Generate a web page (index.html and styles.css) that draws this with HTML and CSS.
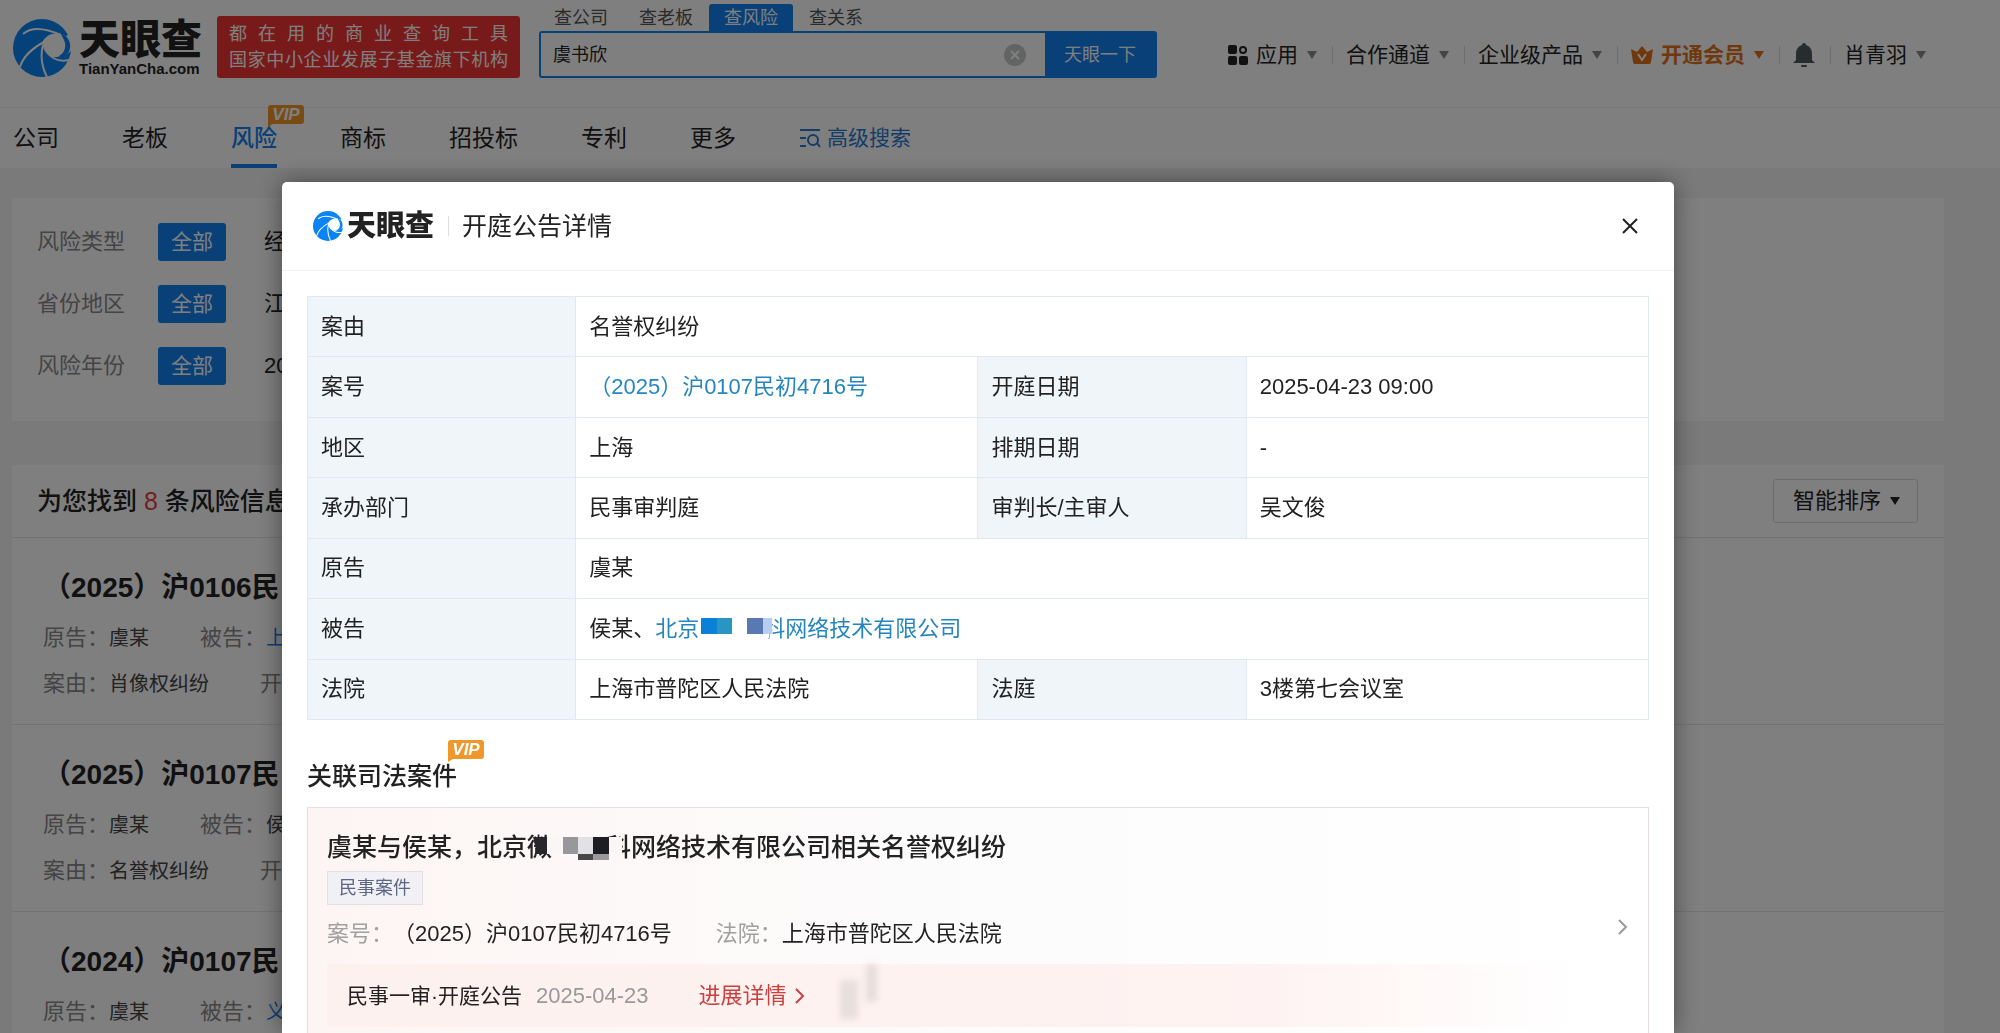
FILE: index.html
```html
<!DOCTYPE html>
<html lang="zh-CN">
<head>
<meta charset="utf-8">
<title>天眼查</title>
<link rel="stylesheet" href="styles.css">
</head>
<body>
<svg class="defs" aria-hidden="true">
  <symbol id="logo" viewBox="0 0 58 58">
    <circle cx="29" cy="29" r="29" fill="#0a84f5"/>
    <path class="cut" d="M29 24C32 16 43 11 53 17L60 13V27C57 37 50 36 44 38C36 39 31 34 29 24Z"/>
    <path d="M47 14C54 16 58 22 57 29C56 36 51 38 46 37C51 34 53 29 52 24C51 20 49 17 47 14Z" fill="#0a84f5"/>
    <path class="line" d="M10 15C18 8 32 9 48 16M31 23C18 30 10 38 7 48M30 26C27 37 29 48 34 58M34 33C39 40 47 43 56 41" fill="none" stroke-width="2"/>
  </symbol>
  <symbol id="vip" viewBox="0 0 36 22">
    <path d="M3 0H33Q36 0 36 3V16Q36 19 33 19H5L0 22V3Q0 0 3 0Z" fill="#f0972b"/>
  </symbol>
  <symbol id="caret" viewBox="0 0 10 8"><path d="M0 0H10L5 8Z" fill="currentColor"/></symbol>
  <symbol id="chev" viewBox="0 0 10 16"><path d="M1 1L8 8L1 15" fill="none" stroke="currentColor" stroke-width="2"/></symbol>
</svg>

<div class="page">
  <header class="top">
    <a class="brand" href="#">
      <svg class="brand-icon"><use href="#logo"/></svg>
      <span class="brand-text"><b>天眼查</b><i>TianYanCha.com</i></span>
    </a>
    <div class="slogan"><span>都 在 用 的 商 业 查 询 工 具</span><span>国家中小企业发展子基金旗下机构</span></div>
    <form class="search">
      <div class="search-tabs">
        <button type="button">查公司</button><button type="button">查老板</button><button type="button" class="on">查风险</button><button type="button">查关系</button>
      </div>
      <div class="search-box">
        <input type="text" value="虞书欣" aria-label="搜索">
        <button type="button" class="clear" aria-label="清空"><svg viewBox="0 0 22 22"><circle cx="11" cy="11" r="11" fill="#c4c8c8"/><path d="M7 7L15 15M15 7L7 15" stroke="#fff" stroke-width="2"/></svg></button>
        <button type="button" class="go">天眼一下</button>
      </div>
    </form>
    <nav class="user-nav">
      <a href="#"><svg class="apps" viewBox="0 0 20 20"><rect width="9" height="9" rx="2"/><circle cx="15" cy="5" r="3" fill="none" stroke="#222" stroke-width="2"/><rect y="11" width="9" height="9" rx="2"/><rect x="11" y="11" width="9" height="9" rx="2"/></svg>应用<svg class="caret"><use href="#caret"/></svg></a>
      <a href="#">合作通道<svg class="caret"><use href="#caret"/></svg></a>
      <a href="#">企业级产品<svg class="caret"><use href="#caret"/></svg></a>
      <a href="#" class="member"><svg class="crown" viewBox="0 0 22 18"><path d="M0 3L6 6L11 0L16 6L22 3L20 16Q20 18 18 18H4Q2 18 2 16Z" fill="currentColor"/><path d="M7 8L11 14L15 8" fill="none" stroke="#fff" stroke-width="2"/></svg>开通会员<svg class="caret"><use href="#caret"/></svg></a>
      <a href="#" aria-label="消息"><svg class="bell" viewBox="0 0 22 24"><path d="M11 0Q13 0 13 2Q19 4 19 11V17L22 20H0L3 17V11Q3 4 9 2Q9 0 11 0Z" fill="#4c5a62"/><rect x="8" y="22" width="6" height="2" rx="1" fill="#4c5a62"/></svg></a>
      <a href="#">肖青羽<svg class="caret"><use href="#caret"/></svg></a>
    </nav>
  </header>

  <nav class="cats">
    <a href="#">公司</a>
    <a href="#">老板</a>
    <a href="#" class="on">风险<span class="vip"><svg><use href="#vip"/></svg><em>VIP</em></span></a>
    <a href="#">商标</a>
    <a href="#">招投标</a>
    <a href="#">专利</a>
    <a href="#">更多</a>
    <a href="#" class="adv"><svg viewBox="0 0 22 20"><path d="M1 2H21M1 10H7M1 18H7M18 15L21 19" fill="none" stroke="currentColor" stroke-width="2"/><circle cx="14" cy="12" r="5" fill="none" stroke="currentColor" stroke-width="2"/></svg>高级搜索</a>
  </nav>

  <main class="content">
    <section class="filters">
      <div class="filter"><span>风险类型</span><button type="button">全部</button><a href="#">经</a></div>
      <div class="filter"><span>省份地区</span><button type="button">全部</button><a href="#">江</a></div>
      <div class="filter"><span>风险年份</span><button type="button">全部</button><a href="#">20</a></div>
    </section>
    <section class="results">
      <div class="results-head">
        <h2>为您找到 <em>8</em> 条风险信息</h2>
        <button type="button" class="sort">智能排序<svg class="caret"><use href="#caret"/></svg></button>
      </div>
      <article class="item">
        <h3>（2025）沪0106民</h3>
        <p><span>原告：</span><b>虞某</b><span>被告：</span><a href="#">上</a></p>
        <p><span>案由：</span><b>肖像权纠纷</b><span>开</span></p>
      </article>
      <article class="item">
        <h3>（2025）沪0107民</h3>
        <p><span>原告：</span><b>虞某</b><span>被告：</span><b>侯</b></p>
        <p><span>案由：</span><b>名誉权纠纷</b><span>开</span></p>
      </article>
      <article class="item">
        <h3>（2024）沪0107民</h3>
        <p><span>原告：</span><b>虞某</b><span>被告：</span><a href="#">义</a></p>
      </article>
    </section>
  </main>
</div>

<div class="mask">
  <div class="modal" role="dialog" aria-labelledby="dlg-title">
    <header class="modal-head">
      <svg class="modal-icon"><use href="#logo"/></svg>
      <b>天眼查</b>
      <h1 id="dlg-title">开庭公告详情</h1>
      <button type="button" class="close" aria-label="关闭"><svg viewBox="0 0 16 16"><path d="M1 1L15 15M15 1L1 15" stroke="#222" stroke-width="2"/></svg></button>
    </header>
    <div class="modal-body">
      <table class="info">
        <colgroup><col class="k"><col class="v"><col class="k"><col class="v"></colgroup>
        <tr><th scope="row">案由</th><td colspan="3">名誉权纠纷</td></tr>
        <tr><th scope="row">案号</th><td><a href="#">（2025）沪0107民初4716号</a></td><th scope="row">开庭日期</th><td>2025-04-23 09:00</td></tr>
        <tr><th scope="row">地区</th><td>上海</td><th scope="row">排期日期</th><td>-</td></tr>
        <tr><th scope="row">承办部门</th><td>民事审判庭</td><th scope="row">审判长/主审人</th><td>吴文俊</td></tr>
        <tr><th scope="row">原告</th><td colspan="3">虞某</td></tr>
        <tr><th scope="row">被告</th><td colspan="3">侯某、<a href="#">北京<span class="hide-a"><svg viewBox="0 0 76 22"><path d="M0 0H70V22H0Z" fill="#fff"/><path d="M2 2H20V18H2Z" fill="#0a80d6"/><path d="M18 2H33V18H18Z" fill="#2a94c2"/><path d="M48 2H64V18H48Z" fill="#5a78b2"/><path d="M64 2H73V18H64Z" fill="#b9cdf2"/></svg>科</span>网络技术有限公司</a></td></tr>
        <tr><th scope="row">法院</th><td>上海市普陀区人民法院</td><th scope="row">法庭</th><td>3楼第七会议室</td></tr>
      </table>

      <h2 class="sub-title">关联司法案件<span class="vip"><svg><use href="#vip"/></svg><em>VIP</em></span></h2>
      <section class="case">
        <div class="case-main">
          <h3>虞某与侯某，北京<span class="hide-b">微<i></i>科<svg viewBox="0 0 92 26"><path d="M7 0H97V17H7Z" fill="#fbf6f6"/><path d="M26 16H92V26H26Z" fill="#fdf8f7"/><path d="M3 0H17V17H7Z" fill="#26262b"/><path d="M33 0H48V17H33Z" fill="#98979b"/><path d="M48 0H63V17H48Z" fill="#e2e1e3"/><path d="M63 0H79V17H63Z" fill="#1d1e23"/><path d="M48 17H63V23H48Z" fill="#47464a"/><path d="M63 17H79V23H63Z" fill="#99989b"/></svg></span>网络技术有限公司相关名誉权纠纷</h3>
          <span class="tag">民事案件</span>
          <dl>
            <div><dt>案号：</dt><dd>（2025）沪0107民初4716号</dd></div>
            <div><dt>法院：</dt><dd>上海市普陀区人民法院</dd></div>
          </dl>
          <div class="stage">
            <b>民事一审·开庭公告</b><time>2025-04-23</time>
            <a href="#">进展详情<svg><use href="#chev"/></svg></a>
            <svg class="smudge" viewBox="0 0 40 63"><path d="M0 16H18V55H0Z" fill="#d9d2d1" opacity=".6"/><path d="M26 0H37V38H26Z" fill="#d0c9c8" opacity=".5"/></svg>
          </div>
        </div>
        <svg class="case-go"><use href="#chev"/></svg>
      </section>
    </div>
  </div>
</div>
</body>
</html>
```
FILE: styles.css
```css
* { box-sizing: border-box; }
body {
  margin: 0;
  height: 100vh;
  overflow: hidden;
  background: #f5f5f5;
  color: #222;
  font-family: "Liberation Sans", "Noto Sans CJK SC", sans-serif;
  font-size: 22px;
  line-height: 32px;
}
h1, h2, h3, p, dl, dd { margin: 0; }
a { color: inherit; text-decoration: none; }
button, input { font: inherit; color: inherit; border: 0; padding: 0; background: none; }
em, i { font-style: normal; }
svg { display: block; flex: none; }
.defs { position: absolute; width: 0; height: 0; }
.cut { fill: #fff; }
.line { stroke: #fff; }

/* header */
.page { height: 100vh; overflow: hidden; }
.top {
  display: flex;
  align-items: flex-start;
  height: 107px;
  padding: 0 74px 0 13px;
  background: #fff;
}
.brand { display: flex; gap: 8px; margin-top: 19px; }
.brand-icon { width: 58px; height: 58px; }
.brand-text { display: flex; flex-direction: column; width: 124px; color: #222; }
.brand-text b { font-size: 41px; font-weight: 900; line-height: 42px; }
.brand-text i { font-size: 15px; font-weight: 700; line-height: 16px; }
.slogan {
  display: flex;
  flex-direction: column;
  width: 303px;
  margin: 16px 0 0 14px;
  padding: 5px 12px;
  border-radius: 3px;
  background: #f03434;
  color: #fff;
  font-size: 18px;
  line-height: 26px;
}
.slogan span { white-space: nowrap; text-align-last: justify; }
.search { margin: 4px 0 0 19px; width: 618px; }
.search-tabs { display: flex; gap: 1px; }
.search-tabs button { width: 84px; height: 27px; font-size: 18px; line-height: 26px; color: #555; }
.search-tabs .on { background: #1080ee; color: #fff; border-radius: 3px 3px 0 0; }
.search-box {
  display: flex;
  align-items: center;
  height: 47px;
  border: 2px solid #1080ee;
  border-radius: 3px;
}
.search-box input { flex: 1; min-width: 0; padding-left: 12px; font-size: 18px; outline: 0; }
.clear { width: 22px; height: 22px; margin-right: 19px; }
.go { width: 110px; height: 43px; background: #1080ee; color: #fff; font-size: 18px; }
.user-nav { display: flex; align-items: center; margin: 39px 0 0 auto; font-size: 21px; white-space: nowrap; }
.user-nav a { display: flex; align-items: center; }
.user-nav a + a { padding-left: 13px; margin-left: 15px; }
.user-nav a + a::before { content: ""; width: 1px; height: 18px; margin: 0 13px 0 -13px; background: #ddd; }
.caret { width: 10px; height: 8px; margin-left: 9px; color: #888; }
.apps { width: 20px; height: 20px; margin-right: 8px; fill: #222; }
.member { color: #e0701a; font-weight: 700; }
.member .caret { color: #e0701a; }
.crown { width: 22px; height: 18px; margin-right: 8px; }
.bell { width: 22px; height: 24px; }

/* category bar */
.cats {
  display: flex;
  gap: 63px;
  height: 61px;
  padding-left: 13px;
  background: #fff;
  border-top: 1px solid #ececec;
  font-size: 23px;
  line-height: 60px;
}
.cats a { position: relative; }
.cats .on { color: #1080ee; font-weight: 500; border-bottom: 4px solid #1080ee; }
.cats .adv { display: flex; align-items: center; gap: 6px; color: #2878d0; font-size: 21px; }
.adv svg { width: 22px; height: 20px; }
.vip { position: absolute; width: 36px; height: 22px; }
.vip svg { width: 36px; height: 22px; }
.vip em {
  position: absolute;
  inset: 0;
  color: #fff;
  font-size: 17px;
  font-weight: 700;
  font-style: italic;
  line-height: 19px;
  text-align: center;
}
.cats .vip { left: 37px; top: -3px; }

/* page content */
.content { padding: 30px 56px 0 12px; }
.filters {
  display: flex;
  flex-direction: column;
  gap: 24px;
  height: 223px;
  padding: 25px;
  background: #fff;
}
.filter { display: flex; align-items: center; height: 38px; }
.filter span { color: #888; }
.filter button { width: 68px; height: 38px; margin: 0 38px 0 33px; border-radius: 3px; background: #1080ee; color: #fff; font-size: 21px; }
.results { margin-top: 44px; background: #fff; }
.results-head {
  display: flex;
  align-items: center;
  justify-content: space-between;
  height: 73px;
  padding: 0 26px 0 25px;
  border-bottom: 1px solid #e6e6e6;
}
.results-head h2 { font-size: 25px; font-weight: 500; white-space: nowrap; }
.results-head em { color: #e8403f; }
.sort {
  display: flex;
  align-items: center;
  width: 145px;
  height: 44px;
  padding-left: 19px;
  border: 1px solid #d8d8d8;
  border-radius: 3px;
}
.sort .caret { color: #222; }
.item { height: 187px; padding: 30px 32px 0 31px; border-bottom: 1px solid #e6e6e6; }
.item h3 { font-size: 28px; font-weight: 700; line-height: 40px; }
.item p { display: flex; margin-bottom: 14px; }
.item h3 + p { margin-top: 14px; }
.item span { color: #888; }
.item b { margin-right: 51px; font-size: 20px; font-weight: 400; color: #444; }
.item p a { color: #1080ee; font-size: 20px; }

/* dialog */
.mask { position: fixed; inset: 0; padding: 182px 326px 0 282px; background: rgba(0, 0, 0, .5); }
.modal {
  height: 100%;
  border-radius: 5px 5px 0 0;
  background: #fff;
  box-shadow: 0 0 24px rgba(0, 0, 0, .45);
  overflow: hidden;
}
.modal-head {
  display: flex;
  align-items: center;
  height: 89px;
  padding: 0 36px 0 31px;
  border-bottom: 1px solid #f0f0f0;
}
.modal-icon { width: 30px; height: 30px; margin-right: 4px; }
.modal-head b { font-size: 29px; font-weight: 900; }
.modal-head h1 { margin-left: 14px; padding-left: 13px; border-left: 1px solid #ddd; font-size: 25px; font-weight: 400; line-height: 20px; }
.close { width: 16px; height: 16px; margin-left: auto; }
.modal-body { padding: 25px; }
.info { width: 100%; height: 424px; border-collapse: collapse; table-layout: fixed; }
.info .k { width: 20%; }
.info .v { width: 30%; }
.info th, .info td {
  height: 60px;
  padding: 0 13px;
  border: 1px solid #dfe9ee;
  text-align: left;
  font-weight: 400;
  white-space: nowrap;
}
.info th { background: #eff5f9; }
.info a { color: #2585bd; }
.hide-a { position: relative; padding-left: 64px; }
.hide-a svg { position: absolute; left: 0; top: 0; width: 76px; height: 22px; }
.sub-title { position: relative; margin-top: 40px; font-size: 25px; font-weight: 500; }
.sub-title .vip { left: 141px; top: -20px; }
.case {
  display: flex;
  align-items: flex-start;
  margin-top: 15px;
  height: 300px;
  padding: 21px 20px 0 19px;
  border: 1px solid #e8dfdd;
  background: linear-gradient(90deg, #fdf5f4, #fcfcfc 50%, #fff);
}
.case-main { flex: 1; }
.case h3 { font-size: 25px; font-weight: 500; line-height: 36px; white-space: nowrap; }
.hide-b { position: relative; }
.hide-b i { display: inline-block; width: 54px; }
.hide-b svg { position: absolute; left: 3px; top: 4px; width: 92px; height: 26px; }
.tag {
  display: block;
  width: 96px;
  margin-top: 6px;
  border: 1px solid #e2e0e6;
  background: #f1f0f4;
  color: #5c6788;
  font-size: 18px;
  text-align: center;
}
.case dl { display: flex; gap: 44px; margin-top: 13px; }
.case dl div { display: flex; }
.case dt { color: #a0a0a0; }
.stage {
  display: flex;
  align-items: center;
  height: 63px;
  margin: 14px 34px 0 0;
  padding-left: 20px;
  background: linear-gradient(90deg, #fdf1ef, #fef3f2 75%, #fff);
}
.stage b { font-size: 21px; font-weight: 400; }
.stage time { margin: 0 50px 0 14px; color: #999; }
.stage a { display: flex; align-items: center; gap: 8px; color: #c9403f; }
.stage a svg { width: 10px; height: 16px; }
.smudge { width: 40px; height: 63px; margin-left: 35px; filter: blur(3px); }
.case-go { width: 10px; height: 16px; margin-top: 90px; color: #999; }
```
